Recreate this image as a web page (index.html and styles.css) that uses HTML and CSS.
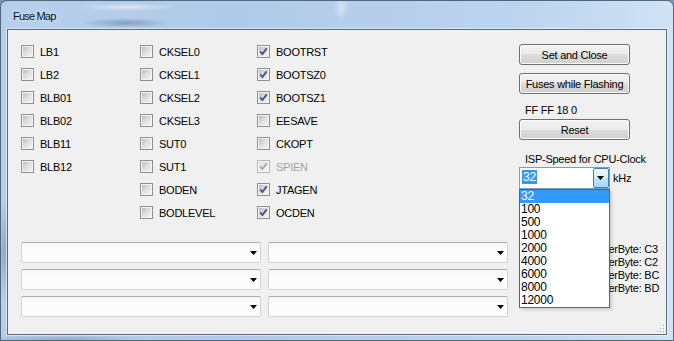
FILE: index.html
```html
<!DOCTYPE html>
<html lang="en">
<head>
  <meta charset="UTF-8">
  <title>Fuse Map</title>
  <link rel="stylesheet" href="styles.css">
</head>
<body>
  <div class="window">
    <div class="titlebar">Fuse Map</div>

    <div class="client">
      <div class="main">
        <div class="fuses">
          <div class="fuse-col first">
            <label class="check"><span class="box"></span>LB1</label>
            <label class="check"><span class="box"></span>LB2</label>
            <label class="check"><span class="box"></span>BLB01</label>
            <label class="check"><span class="box"></span>BLB02</label>
            <label class="check"><span class="box"></span>BLB11</label>
            <label class="check"><span class="box"></span>BLB12</label>
          </div>
          <div class="fuse-col second">
            <label class="check"><span class="box"></span>CKSEL0</label>
            <label class="check"><span class="box"></span>CKSEL1</label>
            <label class="check"><span class="box"></span>CKSEL2</label>
            <label class="check"><span class="box"></span>CKSEL3</label>
            <label class="check"><span class="box"></span>SUT0</label>
            <label class="check"><span class="box"></span>SUT1</label>
            <label class="check"><span class="box"></span>BODEN</label>
            <label class="check"><span class="box"></span>BODLEVEL</label>
          </div>
          <div class="fuse-col">
            <label class="check"><span class="box"><svg viewBox="0 0 11 11"><path d="M2.2 5.4l2.2 2.6 4.3-5.6"/></svg></span>BOOTRST</label>
            <label class="check"><span class="box"><svg viewBox="0 0 11 11"><path d="M2.2 5.4l2.2 2.6 4.3-5.6"/></svg></span>BOOTSZ0</label>
            <label class="check"><span class="box"><svg viewBox="0 0 11 11"><path d="M2.2 5.4l2.2 2.6 4.3-5.6"/></svg></span>BOOTSZ1</label>
            <label class="check"><span class="box"></span>EESAVE</label>
            <label class="check"><span class="box"></span>CKOPT</label>
            <label class="check disabled"><span class="box"><svg viewBox="0 0 11 11"><path d="M2.2 5.4l2.2 2.6 4.3-5.6"/></svg></span>SPIEN</label>
            <label class="check"><span class="box"><svg viewBox="0 0 11 11"><path d="M2.2 5.4l2.2 2.6 4.3-5.6"/></svg></span>JTAGEN</label>
            <label class="check"><span class="box"><svg viewBox="0 0 11 11"><path d="M2.2 5.4l2.2 2.6 4.3-5.6"/></svg></span>OCDEN</label>
          </div>
        </div>

        <div class="selects">
          <div class="select"></div>
          <div class="select"></div>
          <div class="select"></div>
          <div class="select"></div>
          <div class="select"></div>
          <div class="select"></div>
        </div>
      </div>

      <div class="side">
        <button class="btn">Set and Close</button>
        <button class="btn second">Fuses while Flashing</button>
        <div class="fuse-bytes">FF FF 18 0</div>
        <button class="btn">Reset</button>
        <div class="speed-label">ISP-Speed for CPU-Clock</div>
        <div class="speed">
          <div class="speed-box">
            <span class="speed-value">32</span>
            <span class="speed-arrow"></span>
          </div>
          <span class="unit">kHz</span>
        </div>
        <div class="byte-list">
          <div>LowerByte: C3</div>
          <div>UpperByte: C2</div>
          <div>LowerByte: BC</div>
          <div>UpperByte: BD</div>
        </div>
      </div>

      <ul class="speed-list">
        <li class="selected">32</li>
        <li>100</li>
        <li>500</li>
        <li>1000</li>
        <li>2000</li>
        <li>4000</li>
        <li>6000</li>
        <li>8000</li>
        <li>12000</li>
      </ul>

      <svg class="grip" width="8" height="8" viewBox="0 0 8 8">
        <rect x="6" y="0" width="1" height="1" fill="#a9a9a9"/>
        <rect x="3" y="3" width="1" height="1" fill="#a9a9a9"/>
        <rect x="6" y="3" width="1" height="1" fill="#a9a9a9"/>
        <rect x="0" y="6" width="1" height="1" fill="#a9a9a9"/>
        <rect x="3" y="6" width="1" height="1" fill="#a9a9a9"/>
        <rect x="6" y="6" width="1" height="1" fill="#a9a9a9"/>
        <rect x="7" y="1" width="1" height="1" fill="#fff"/>
        <rect x="4" y="4" width="1" height="1" fill="#fff"/>
        <rect x="7" y="4" width="1" height="1" fill="#fff"/>
        <rect x="1" y="7" width="1" height="1" fill="#fff"/>
        <rect x="4" y="7" width="1" height="1" fill="#fff"/>
        <rect x="7" y="7" width="1" height="1" fill="#fff"/>
      </svg>
    </div>
  </div>
</body>
</html>
```

FILE: styles.css
```css
* {
  box-sizing: border-box;
}

body {
  margin: 0;
  width: 674px;
  height: 341px;
  overflow: hidden;
  background: #7a93b3;
  font-family: "Liberation Sans", Arial, sans-serif;
  font-size: 11px;
  letter-spacing: -0.25px;
  color: #000;
}

/* glass frame */
.window {
  width: 674px;
  height: 341px;
  border: 1px solid #54667b;
  border-radius: 7px 7px 0 0;
  padding: 0 6px 5px 6px;
  display: flex;
  flex-direction: column;
  background:
    radial-gradient(ellipse 50px 4px at 125px 6px, rgba(225, 232, 242, 0.9), transparent),
    radial-gradient(ellipse 45px 5px at 125px 22px, rgba(80, 100, 130, 0.45), transparent),
    radial-gradient(ellipse 8px 14px at 340px 6px, rgba(225, 235, 248, 0.7), transparent),
    radial-gradient(ellipse 6px 50px at 3px 250px, rgba(80, 95, 120, 0.35), transparent),
    radial-gradient(ellipse 80px 4px at 60px 338px, rgba(70, 90, 120, 0.3), transparent),
    linear-gradient(90deg, #b5cfeb 0%, #b0cbe9 35%, #bad3ee 75%, #d0e2f4 100%);
}

.titlebar {
  height: 28px;
  padding: 9px 0 0 6px;
  font-size: 11px;
  letter-spacing: -0.8px;
  line-height: 12px;
  color: #111;
  text-shadow: 0 0 6px rgba(255, 255, 255, 0.9);
}

.client {
  position: relative;
  height: 306px;
  display: flex;
  background: #f0f0f0;
  border: 1px solid #5b6a7c;
  box-shadow: 0 0 0 1px rgba(255, 255, 255, 0.45);
}

.main {
  padding: 10px 0 0 13px;
}

.fuses {
  display: flex;
  height: 184px;
}

.fuse-col {
  display: flex;
  flex-direction: column;
}

.fuse-col.first {
  width: 119px;
}

.fuse-col.second {
  width: 117px;
}

.check {
  display: flex;
  align-items: center;
  gap: 6px;
  height: 23px;
  white-space: nowrap;
}

.box {
  position: relative;
  flex: none;
  width: 13px;
  height: 13px;
  border: 1px solid #8e8f8f;
  background: #f4f4f4;
}

.box::before {
  content: "";
  position: absolute;
  inset: 1px;
  background: linear-gradient(135deg, #b9bdc2 0%, #dcdde0 45%, #f3f3f3 100%);
}

.box svg {
  position: absolute;
  left: 0;
  top: 0;
  width: 11px;
  height: 11px;
  fill: none;
  stroke: #3f5287;
  stroke-width: 1.8;
}

.check.disabled {
  color: #a3a3a3;
}

.check.disabled .box {
  border-color: #b8b8b8;
}

.check.disabled .box::before {
  background: linear-gradient(135deg, #e2e2e2, #f4f4f4);
}

.check.disabled .box svg {
  stroke: #a8a8a8;
}

.selects {
  display: grid;
  grid-template-columns: 240px 240px;
  grid-auto-rows: 21px;
  gap: 6px 7px;
  margin-top: 18px;
}

.select {
  position: relative;
  border: 1px solid #d3d3d3;
  border-top-color: #acacac;
  border-radius: 2px;
  background: linear-gradient(#f7f7f7, #fdfdfd 30%, #fcfcfc);
}

.select::after {
  content: "";
  position: absolute;
  right: 3px;
  top: 8px;
  width: 7px;
  height: 4px;
  background: #000;
  clip-path: polygon(0 0, 100% 0, 50% 100%);
}

.side {
  width: 111px;
  margin-left: 11px;
  padding-top: 14px;
  display: flex;
  flex-direction: column;
  white-space: nowrap;
}

.btn {
  height: 21px;
  padding: 0;
  font: inherit;
  letter-spacing: inherit;
  color: #000;
  border: 1px solid #707070;
  border-radius: 3px;
  background: linear-gradient(#f2f2f2 0%, #ebebeb 50%, #dddddd 50%, #cfcfcf 100%);
  box-shadow: inset 0 0 0 1px #fbfbfb;
}

.btn.second {
  margin-top: 8px;
}

.fuse-bytes {
  margin-top: 10px;
  padding-left: 6px;
  line-height: 13px;
}

.fuse-bytes + .btn {
  margin-top: 2px;
}

.speed-label {
  margin-top: 13px;
  padding-left: 6px;
  line-height: 13px;
}

.speed {
  display: flex;
  align-items: center;
  margin-top: 1px;
  height: 22px;
}

.speed-box {
  position: relative;
  flex: none;
  width: 91px;
  height: 22px;
  border: 1px solid #7f9db9;
  background: #fff;
  padding: 2px 0 0 2px;
}

.speed-value {
  display: inline-block;
  height: 14px;
  line-height: 14px;
  padding: 0 1px;
  font-size: 12px;
  background: #3399ff;
  color: #fff;
}

.speed-arrow {
  position: absolute;
  right: 0;
  top: 0;
  width: 16px;
  height: 20px;
  border: 1px solid #3c7fb1;
  border-radius: 2px;
  background: linear-gradient(#eaf6fd 0%, #d9f0fc 50%, #bee6fd 50%, #a7d9f5 100%);
}

.speed-arrow::after {
  content: "";
  position: absolute;
  left: 3px;
  top: 7px;
  width: 7px;
  height: 4px;
  background: #000;
  clip-path: polygon(0 0, 100% 0, 50% 100%);
}

.unit {
  margin-left: 3px;
}

.byte-list {
  margin-top: 54px;
  padding-left: 70px;
  line-height: 13px;
}

/* opened drop-down of the speed box */
.speed-list {
  position: absolute;
  left: 511px;
  top: 159px;
  width: 91px;
  height: 119px;
  margin: 0;
  padding: 0;
  list-style: none;
  background: #fff;
  border: 1px solid #646464;
  box-shadow: 2px 2px 3px rgba(0, 0, 0, 0.15);
}

.speed-list li {
  height: 13px;
  line-height: 13px;
  padding-left: 1px;
  font-size: 12px;
}

.speed-list li.selected {
  background: #3399ff;
  color: #fff;
}

.grip {
  position: absolute;
  right: 1px;
  bottom: 1px;
}
```
